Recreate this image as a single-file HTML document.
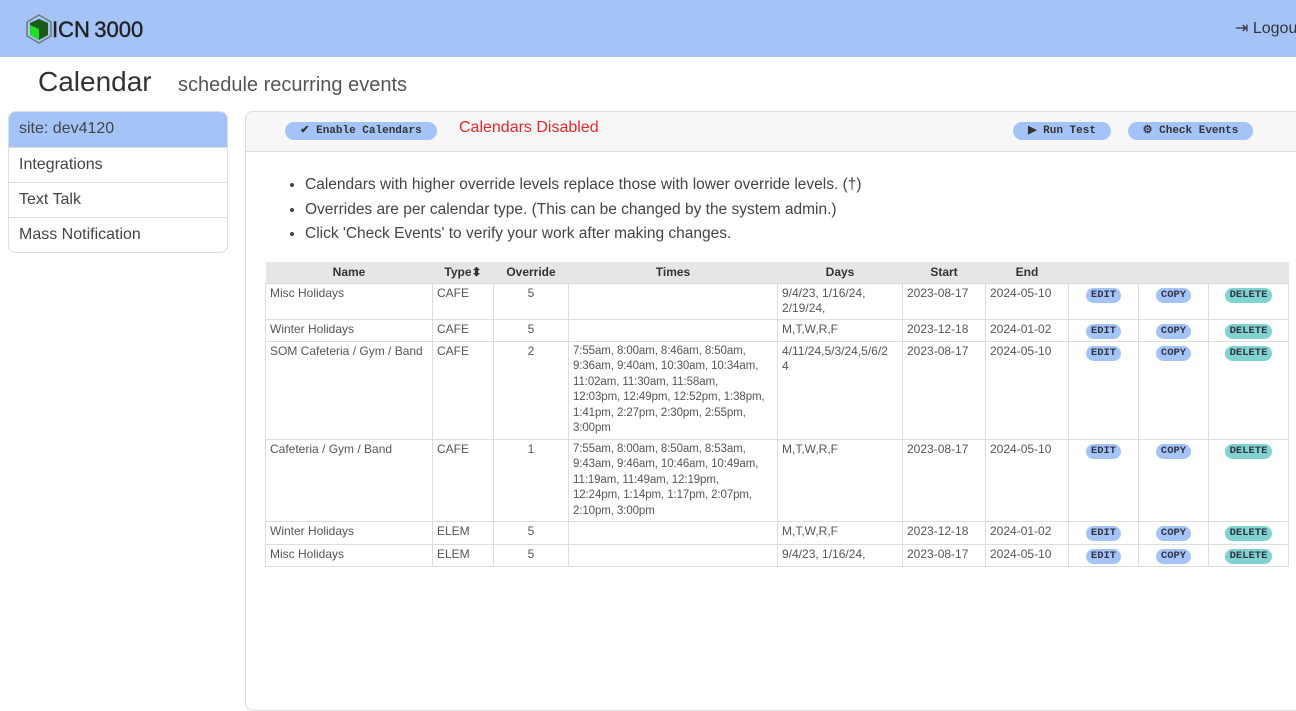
<!DOCTYPE html>
<html><head><meta charset="utf-8"><style>
*{box-sizing:border-box;margin:0;padding:0}
body{width:1296px;height:556px;overflow:hidden;background:#fff;font-family:"Liberation Sans",sans-serif;color:#444;position:relative}
.nav{position:absolute;left:0;top:0;width:1296px;height:57px;background:#a4c4f8}
.logo{position:absolute;left:26px;top:14px;font-size:22px;color:#222;white-space:nowrap;-webkit-text-stroke:0.4px #222}
.logout{position:absolute;left:1235px;top:18px;font-size:16px;color:#333;white-space:nowrap}
h1{position:absolute;left:38px;top:66px;font-size:28px;font-weight:normal;color:#333}
.sub{position:absolute;left:178px;top:74px;font-size:20px;color:#555}
.side{position:absolute;left:8px;top:111px;width:220px;border:1px solid #ddd;border-radius:8px;overflow:hidden}
.side div{height:35px;line-height:34px;padding-left:10px;font-size:16px;border-top:1px solid #ddd;color:#444}
.side div:first-child{background:#a4c4f8;border-top:none}
.main{position:absolute;left:245px;top:111px;width:1060px;height:600px;border:1px solid #ddd;border-radius:8px}
.bar{height:40px;background:#f7f7f7;border-bottom:1px solid #ddd;border-radius:8px 8px 0 0;position:relative}
.btn{position:absolute;top:10px;height:18px;background:#a4c4f8;border-radius:9px;font-family:"Liberation Mono",monospace;font-size:11px;font-weight:bold;line-height:18px;text-align:center;color:#333}
.dis{position:absolute;left:213px;top:7px;color:#e8262a;font-size:16px}
ul{position:absolute;left:305px;top:173px;font-size:15.5px;line-height:24.5px;color:#444}
table{position:absolute;left:265px;top:262px;border-collapse:collapse;font-size:12px;table-layout:fixed}
th{background:#e6e6e6;height:21px;font-weight:bold;color:#333;font-size:12px}
td{border:1px solid #ddd;vertical-align:top;padding:2px 4px;line-height:15.5px;color:#555}
td.t{white-space:nowrap;font-size:11.5px;letter-spacing:-0.1px;overflow:hidden}
.c{text-align:center}
.p{display:inline-block;background:#a4c4f8;border-radius:8px;padding:0 5px;font-family:"Liberation Mono",monospace;font-size:10.5px;font-weight:bold;line-height:15px;color:#334;margin-top:1px}
.d{background:#7fd3d0}
</style></head><body>
<div class="nav">
<div class="logo"><svg width="26" height="30" viewBox="0 0 26 30" style="vertical-align:-7px"><polygon points="13,1 25,8 25,22 13,29 1,22 1,8" fill="none" stroke="#777" stroke-width="1.5"/><polygon points="4,9 13,5 22,9 22,21 13,26 4,21" fill="#1b5a1b"/><polygon points="4,11 13,15 13,26 4,21" fill="#22dd22"/></svg>ICN&thinsp;3000</div>
<div class="logout">⇥ Logout</div>
</div>
<h1>Calendar</h1><div class="sub">schedule recurring events</div>
<div class="side"><div>site: dev4120</div><div>Integrations</div><div>Text Talk</div><div>Mass Notification</div></div>
<div class="main"><div class="bar">
<div class="btn" style="left:39px;width:152px">✔ Enable Calendars</div>
<div class="dis">Calendars Disabled</div>
<div class="btn" style="left:767px;width:98px">▶ Run Test</div>
<div class="btn" style="left:882px;width:125px">⚙ Check Events</div>
</div></div>
<ul><li>Calendars with higher override levels replace those with lower override levels. (†)</li><li>Overrides are per calendar type. (This can be changed by the system admin.)</li><li>Click 'Check Events' to verify your work after making changes.</li></ul>
<table>
<colgroup><col style="width:167px"><col style="width:61px"><col style="width:75px"><col style="width:209px"><col style="width:125px"><col style="width:83px"><col style="width:83px"><col style="width:70px"><col style="width:70px"><col style="width:80px"></colgroup>
<tr><th>Name</th><th>Type⬍</th><th>Override</th><th>Times</th><th>Days</th><th>Start</th><th>End</th><th></th><th></th><th></th></tr>
<tr style="height:36px"><td>Misc Holidays</td><td>CAFE</td><td class="c">5</td><td></td><td>9/4/23, 1/16/24,<br>2/19/24,</td><td>2023-08-17</td><td>2024-05-10</td><td class="c"><span class="p">EDIT</span></td><td class="c"><span class="p">COPY</span></td><td class="c"><span class="p d">DELETE</span></td></tr>
<tr style="height:22px"><td>Winter Holidays</td><td>CAFE</td><td class="c">5</td><td></td><td>M,T,W,R,F</td><td>2023-12-18</td><td>2024-01-02</td><td class="c"><span class="p">EDIT</span></td><td class="c"><span class="p">COPY</span></td><td class="c"><span class="p d">DELETE</span></td></tr>
<tr><td>SOM Cafeteria / Gym / Band</td><td>CAFE</td><td class="c">2</td><td class="t">7:55am, 8:00am, 8:46am, 8:50am,<br>9:36am, 9:40am, 10:30am, 10:34am,<br>11:02am, 11:30am, 11:58am,<br>12:03pm, 12:49pm, 12:52pm, 1:38pm,<br>1:41pm, 2:27pm, 2:30pm, 2:55pm,<br>3:00pm</td><td>4/11/24,5/3/24,5/6/2<br>4</td><td>2023-08-17</td><td>2024-05-10</td><td class="c"><span class="p">EDIT</span></td><td class="c"><span class="p">COPY</span></td><td class="c"><span class="p d">DELETE</span></td></tr>
<tr><td>Cafeteria / Gym / Band</td><td>CAFE</td><td class="c">1</td><td class="t">7:55am, 8:00am, 8:50am, 8:53am,<br>9:43am, 9:46am, 10:46am, 10:49am,<br>11:19am, 11:49am, 12:19pm,<br>12:24pm, 1:14pm, 1:17pm, 2:07pm,<br>2:10pm, 3:00pm</td><td>M,T,W,R,F</td><td>2023-08-17</td><td>2024-05-10</td><td class="c"><span class="p">EDIT</span></td><td class="c"><span class="p">COPY</span></td><td class="c"><span class="p d">DELETE</span></td></tr>
<tr style="height:23px"><td>Winter Holidays</td><td>ELEM</td><td class="c">5</td><td></td><td>M,T,W,R,F</td><td>2023-12-18</td><td>2024-01-02</td><td class="c"><span class="p">EDIT</span></td><td class="c"><span class="p">COPY</span></td><td class="c"><span class="p d">DELETE</span></td></tr>
<tr><td>Misc Holidays</td><td>ELEM</td><td class="c">5</td><td></td><td>9/4/23, 1/16/24,</td><td>2023-08-17</td><td>2024-05-10</td><td class="c"><span class="p">EDIT</span></td><td class="c"><span class="p">COPY</span></td><td class="c"><span class="p d">DELETE</span></td></tr>
</table>
</body></html>
